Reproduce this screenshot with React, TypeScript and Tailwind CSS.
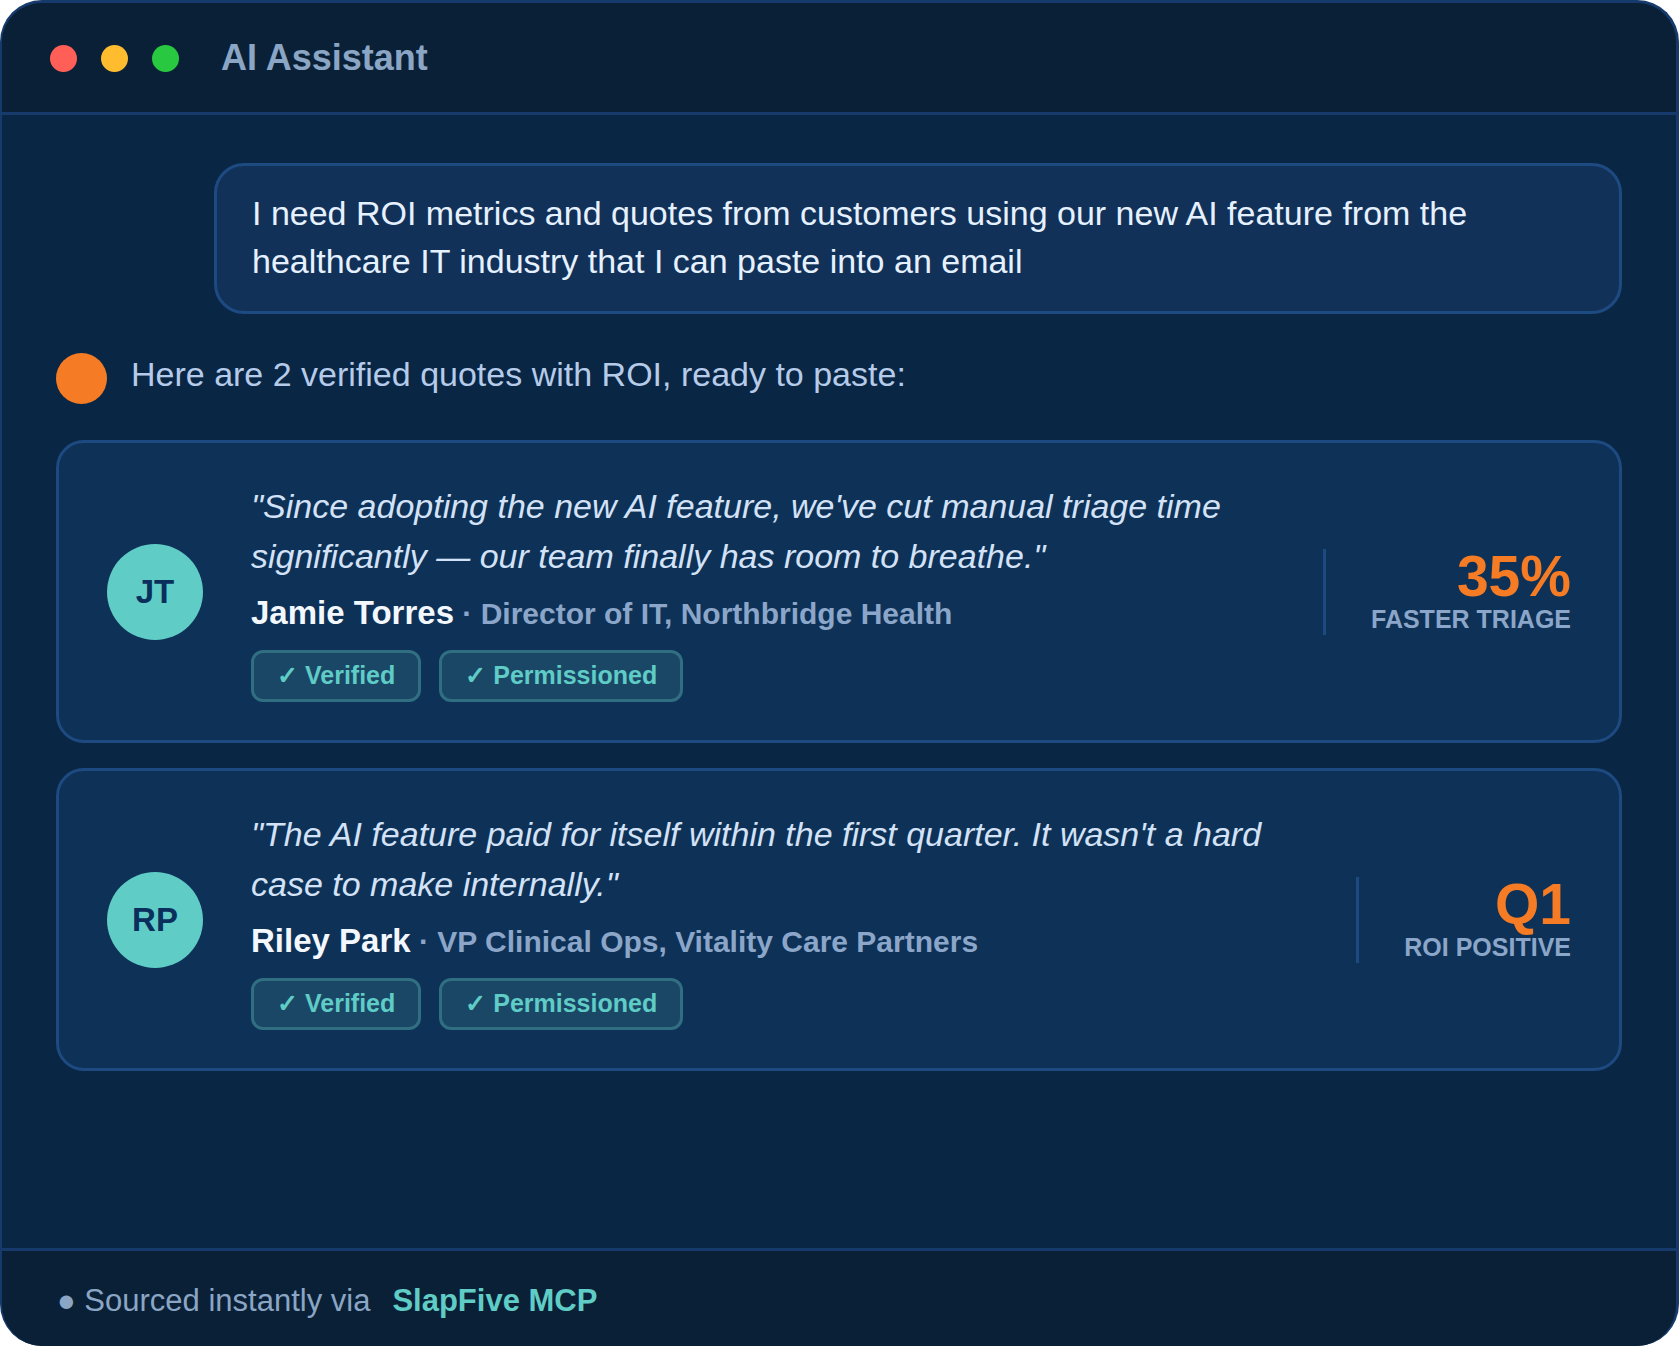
type Quote = {
  initials: string;
  text: string;
  name: string;
  role: string;
  stat: string;
  statLabel: string;
};

const quotes: Quote[] = [
  {
    initials: 'JT',
    text: `"Since adopting the new AI feature, we've cut manual triage time significantly — our team finally has room to breathe."`,
    name: 'Jamie Torres',
    role: 'Director of IT, Northbridge Health',
    stat: '35%',
    statLabel: 'Faster triage',
  },
  {
    initials: 'RP',
    text: `"The AI feature paid for itself within the first quarter. It wasn't a hard case to make internally."`,
    name: 'Riley Park',
    role: 'VP Clinical Ops, Vitality Care Partners',
    stat: 'Q1',
    statLabel: 'ROI positive',
  },
];

const badges = ['Verified', 'Permissioned'];

function QuoteCard({ quote }: { quote: Quote }) {
  return (
    <article className="flex items-center gap-12 rounded-[28px] border-[3px] border-[#1e4a82] bg-[#0e3157] px-12 py-[38px]">
      <div className="flex size-24 shrink-0 items-center justify-center rounded-full bg-[#5fccc6] text-[33px] font-bold text-[#0a2f5c]">
        {quote.initials}
      </div>

      <div className="min-w-0 flex-1">
        <p className="text-[34px] leading-[50px] text-[#d3e2f6] italic">{quote.text}</p>
        <p className="mt-2 text-[30px] leading-[48px] font-bold text-[#8ba6c8]">
          <span className="text-[33px] text-[#f3f8ff]">{quote.name}</span> · {quote.role}
        </p>
        <div className="mt-3 flex flex-wrap gap-[18px]">
          {badges.map((badge) => (
            <span
              key={badge}
              className="rounded-xl border-[3px] border-[#2f6f81] bg-[#1b4767] px-[23px] pt-[7px] pb-[9px] text-[25px] leading-[30px] font-bold text-[#5fccc6]"
            >
              ✓ {badge}
            </span>
          ))}
        </div>
      </div>

      <div className="shrink-0 border-l-[3px] border-[#1e4a82] pl-[45px] text-right font-bold">
        <div className="text-[57px] leading-[54px] text-[#f57c24]">{quote.stat}</div>
        <div className="text-[25px] leading-[32px] text-[#8ba6c8] uppercase">{quote.statLabel}</div>
      </div>
    </article>
  );
}

export default function App() {
  return (
    <main className="flex min-h-screen flex-col overflow-hidden rounded-[42px] border-t-[3px] border-r-[3px] border-l-2 border-[#163a6b] bg-[#092644] font-['Liberation_Sans',Arial,sans-serif]">
      <header className="flex items-center border-b-[3px] border-[#163a6b] bg-[#0a2037] px-12 pt-[33px] pb-8">
        <div className="flex gap-6">
          <span className="size-[27px] rounded-full bg-[#ff5f57]" />
          <span className="size-[27px] rounded-full bg-[#febc2e]" />
          <span className="size-[27px] rounded-full bg-[#28c840]" />
        </div>
        <h1 className="ml-[42px] text-[36px] leading-[44px] font-bold text-[#8ba6c4]">AI Assistant</h1>
      </header>

      <section className="flex flex-1 flex-col px-[54px] py-12">
        <div className="ml-[158px] rounded-[30px] border-[3px] border-[#1e4a82] bg-[#123158] px-[35px] pt-[23px] pb-[26px] text-[34px] leading-[48px] text-[#e6f1ff]">
          I need ROI metrics and quotes from customers using our new AI feature from the healthcare IT industry that I
          can paste into an email
        </div>

        <div className="mt-[39px] flex items-start gap-6">
          <span className="size-[51px] shrink-0 rounded-full bg-[#f57c24]" />
          <p className="text-[34px] leading-[43px] text-[#b5cbe9]">Here are 2 verified quotes with ROI, ready to paste:</p>
        </div>

        <div className="mt-9 flex flex-col gap-[25px]">
          {quotes.map((quote) => (
            <QuoteCard key={quote.initials} quote={quote} />
          ))}
        </div>
      </section>

      <footer className="border-t-[3px] border-[#163a6b] bg-[#0a2037] px-[55px] pt-[30px] pb-[25px] text-[31px] leading-[40px] text-[#8ba6c4]">
        ● Sourced instantly via
        <strong className="ml-[22px] font-bold text-[#5fccc6]">SlapFive MCP</strong>
      </footer>
    </main>
  );
}
